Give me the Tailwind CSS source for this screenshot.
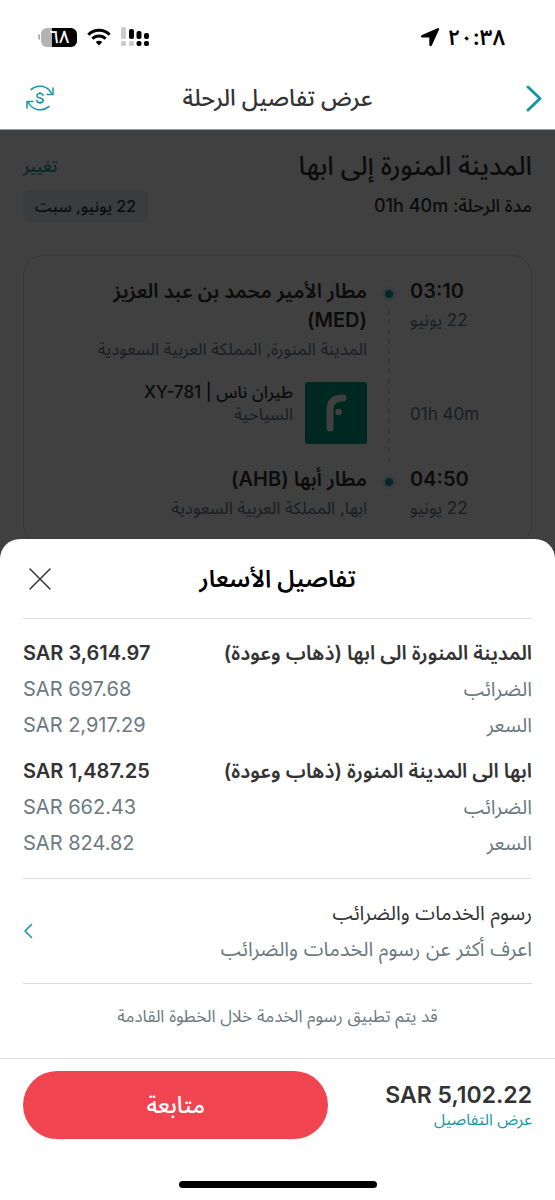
<!DOCTYPE html>
<html lang="ar" dir="rtl">
  <head>
    <meta charset="UTF-8" />
    <meta name="viewport" content="width=device-width, initial-scale=1.0" />
    <title>عرض تفاصيل الرحلة</title>
    <script src="https://cdn.jsdelivr.net/npm/@tailwindcss/browser@4"></script>
  </head>

  <body class="min-h-screen flex flex-col bg-white text-[#333333] font-[Inter,'Noto_Sans_Arabic','DejaVu_Sans',sans-serif]">
    <!-- Status bar -->
    <div class="flex items-center justify-between h-[74px] ps-[50px] pe-[38px] text-black">
      <div class="flex items-center gap-2">
        <span class="text-[22px] leading-7 font-semibold" dir="ltr">٢٠:٣٨</span>
        <svg class="w-5 h-5" viewBox="0 0 20 20" fill="currentColor">
          <path d="M17.500 1.200 2 8c-1.600.7-1.300 2.500.3 2.500h7v7.300c0 1.600 1.900 1.900 2.600.4L19 2.700c.5-1.100-.4-2-1.500-1.500z" />
        </svg>
      </div>
      <div class="flex items-center gap-[10px]">
        <svg class="w-7 h-5" viewBox="0 0 28 20">
          <g fill="#cccccc">
            <rect x="0" y="0" width="5" height="12" rx="1.5" />
            <rect x="0" y="14" width="5" height="5" rx="1.5" />
            <rect x="8" y="14" width="5" height="5" rx="1.5" />
          </g>
          <g fill="#000000">
            <rect x="8" y="2" width="5" height="10" rx="2" />
            <rect x="15.500" y="4" width="5" height="8" rx="2" />
            <rect x="23" y="6" width="5" height="6" rx="2" />
            <rect x="15.500" y="14" width="5" height="5" rx="2" />
            <rect x="23" y="14" width="5" height="5" rx="2" />
          </g>
        </svg>
        <svg class="w-6 h-[18px]" viewBox="0 0 24 18" fill="none" stroke="#000000" stroke-width="3">
          <path d="M1.300 6.700a15.200 15.200 0 0 1 21.400 0" />
          <path d="M5.400 10.800a9.400 9.400 0 0 1 13.200 0" />
          <path d="M12 17.400 8.700 14a4.700 4.700 0 0 1 6.600 0z" fill="#000000" stroke="none" />
        </svg>
        <div class="flex items-center gap-px">
          <div class="flex items-center justify-center w-9 h-[19px] rounded-md bg-linear-to-r from-[#b3b3b3] from-30% to-black to-30% text-white text-lg leading-4 font-medium">٦٨</div>
          <div class="w-[2px] h-[6px] rounded-e-full bg-[#b3b3b3]"></div>
        </div>
      </div>
    </div>

    <!-- Navigation -->
    <header class="grid grid-cols-[1fr_auto_1fr] items-center h-[55px] pb-[7px]">
      <button class="justify-self-start ms-[13px] w-4 h-7 text-[#1597a9]" aria-label="رجوع">
        <svg class="w-4 h-7" viewBox="0 0 16 28" fill="none" stroke="currentColor" stroke-width="3" stroke-linecap="round" stroke-linejoin="round">
          <path d="M2 3l12 11.500L2 26" />
        </svg>
      </button>
      <h1 class="text-[23px] leading-7 font-medium">عرض تفاصيل الرحلة</h1>
      <button class="justify-self-end me-[26px] w-7 h-7 text-[#1597a9]" aria-label="العملة">
        <svg class="w-7 h-7" viewBox="0 0 28 28" fill="none" stroke="currentColor" stroke-width="1.500" stroke-linecap="round" stroke-linejoin="round">
          <path d="M5 5.600C11 .2 21 .8 26 10" />
          <path d="M27 4v6.500h-6" />
          <path d="M23 22.400c-6 5.400-16 4.800-21-4.400" />
          <path d="M1 24v-6.500h6" />
          <path d="M17 11.500c-.2-1.300-1.400-2-3-2s-3 .8-3 2.200c0 3.200 6.200 1.500 6.200 4.700 0 1.400-1.400 2.200-3.200 2.200s-3.100-.8-3.200-2.200M14 8.500v1M14 18.600v1" />
        </svg>
      </button>
    </header>

    <!-- Trip, dimmed behind the sheet -->
    <section class="relative px-[23px] pt-[18px] pb-6 border-t border-gray-400">
      <div class="flex items-center justify-between">
        <h2 class="text-[26px] leading-9 font-medium">المدينة المنورة إلى ابها</h2>
        <a href="#" class="text-[17px] leading-6 font-medium text-[#1597a9]">تغيير</a>
      </div>
      <div class="flex items-center justify-between mt-[6px]">
        <p class="text-lg leading-6 font-medium">مدة الرحلة: <bdi>01h 40m</bdi></p>
        <span class="px-3 rounded-md bg-[#e9edf5] text-base leading-8 font-medium">22 يونيو, سبت</span>
      </div>

      <div class="grid grid-cols-[121px_43px_1fr] mt-[33px] pt-[21px] pb-[21px] rounded-[20px] border border-[#d8d8dc]">
        <div class="flex flex-col justify-between text-end leading-[29px]">
          <div>
            <div class="text-xl leading-[29px] font-semibold">03:10</div>
            <div class="text-[17px] leading-[29px] text-[#6d7886]">22 يونيو</div>
          </div>
          <div class="pt-7 text-[17px] leading-[29px] text-[#6d7886]"><bdi>01h 40m</bdi></div>
          <div>
            <div class="text-xl leading-[29px] font-semibold">04:50</div>
            <div class="text-[17px] leading-[29px] text-[#6d7886]">22 يونيو</div>
          </div>
        </div>
        <div class="flex flex-col items-center pt-[10px] pb-[34px]">
          <span class="w-[14px] h-[14px] rounded-full border-[3px] border-[#dff3f6] bg-[#1597a9]"></span>
          <span class="flex-1 mt-2 mb-3 border-s-2 border-dashed border-[#dcdfe5]"></span>
          <span class="w-[14px] h-[14px] rounded-full border-[3px] border-[#dff3f6] bg-[#1597a9]"></span>
        </div>
        <div class="pe-4">
          <h3 class="pe-12 text-xl leading-[29px] font-semibold">مطار الأمير محمد بن عبد العزيز (MED)</h3>
          <p class="text-[17px] leading-[29px] text-[#6d7886]">المدينة المنورة, المملكة العربية السعودية</p>
          <div class="flex gap-3 mt-[18px] mb-[21px]">
            <svg class="w-[62px] h-[62px] rounded-xs bg-[#00a088]" viewBox="0 0 62 62" fill="none" stroke="#ffffff">
              <path d="M25 46V28c0-8 4-12 13-12" stroke-width="7" stroke-linecap="round" />
              <circle cx="33.500" cy="30" r="3.200" fill="#ffffff" stroke="none" />
            </svg>
            <div>
              <p class="text-[17px] leading-5 font-medium">طيران ناس | XY-781</p>
              <p class="text-[17px] leading-6 text-[#6d7886]">السياحية</p>
            </div>
          </div>
          <h3 class="text-xl leading-[29px] font-semibold">مطار أبها (AHB)</h3>
          <p class="text-[17px] leading-[29px] text-[#6d7886]">ابها, المملكة العربية السعودية</p>
        </div>
      </div>
      <div class="absolute inset-0 bg-black/75"></div>
    </section>

    <!-- Price sheet -->
    <main class="relative -mt-[30px] px-[23px] rounded-t-[20px] bg-white">
      <div class="relative flex items-center justify-center h-20 border-b border-[#dddddd]">
        <h2 class="text-2xl leading-9 font-semibold text-black">تفاصيل الأسعار</h2>
        <button class="absolute end-[6px] w-[22px] h-[22px]" aria-label="إغلاق">
          <svg class="w-[22px] h-[22px]" viewBox="0 0 22 22" fill="none" stroke="currentColor" stroke-width="1.500" stroke-linecap="round">
            <path d="M1 1l20 20M21 1L1 21" />
          </svg>
        </button>
      </div>

      <div class="flex flex-col gap-[10px] pt-4 pb-[17px] border-b border-[#dddddd] text-xl leading-9 text-[#6b7980]">
        <dl class="grid grid-cols-[1fr_auto]">
          <dt class="font-semibold text-[#333333]">المدينة المنورة الى ابها (ذهاب وعودة)</dt>
          <dd class="text-end font-semibold text-[#333333]"><bdi>SAR 3,614.97</bdi></dd>
          <dt>الضرائب</dt>
          <dd class="text-end"><bdi>SAR 697.68</bdi></dd>
          <dt>السعر</dt>
          <dd class="text-end"><bdi>SAR 2,917.29</bdi></dd>
        </dl>
        <dl class="grid grid-cols-[1fr_auto]">
          <dt class="font-semibold text-[#333333]">ابها الى المدينة المنورة (ذهاب وعودة)</dt>
          <dd class="text-end font-semibold text-[#333333]"><bdi>SAR 1,487.25</bdi></dd>
          <dt>الضرائب</dt>
          <dd class="text-end"><bdi>SAR 662.43</bdi></dd>
          <dt>السعر</dt>
          <dd class="text-end"><bdi>SAR 824.82</bdi></dd>
        </dl>
      </div>

      <a href="#" class="flex items-center justify-between py-4 border-b border-[#dddddd] text-xl leading-9">
        <span>
          <span class="block">رسوم الخدمات والضرائب</span>
          <span class="block text-[#6b7980]">اعرف أكثر عن رسوم الخدمات والضرائب</span>
        </span>
        <svg class="w-[10px] h-4 text-[#1597a9]" viewBox="0 0 10 16" fill="none" stroke="currentColor" stroke-width="1.600" stroke-linecap="round" stroke-linejoin="round">
          <path d="M8.500 1.500L2 8l6.500 6.500" />
        </svg>
      </a>

      <p class="pt-4 pb-[26px] text-center text-[17px] leading-8 text-[#6b7980]">قد يتم تطبيق رسوم الخدمة خلال الخطوة القادمة</p>
    </main>

    <!-- Total and action -->
    <footer class="flex items-center justify-between px-[23px] py-3 border-t border-[#dddddd]">
      <div>
        <div class="text-[23px] leading-7 font-semibold"><bdi>SAR 5,102.22</bdi></div>
        <a href="#" class="block text-base leading-5 text-[#1597a9]">عرض التفاصيل</a>
      </div>
      <button class="w-3/5 h-[68px] rounded-full bg-[#f04550] text-white text-[23px] font-medium">متابعة</button>
    </footer>
    <div class="w-[198px] h-[7px] mx-auto mt-auto mb-3 rounded-full bg-black"></div>
  </body>
</html>
